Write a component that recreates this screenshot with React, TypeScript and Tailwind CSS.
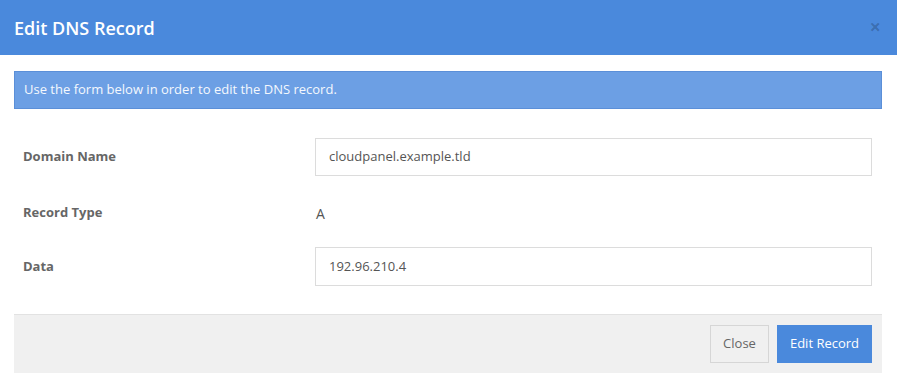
import React from "react";

export default function App() {
  return (
    <div className="w-[897px] h-[388px] bg-white font-['Open_Sans',sans-serif] overflow-hidden">
      <div className="h-[55px] bg-[#4a89dc] flex items-center justify-between pl-[14px] pr-[16px]">
        <h4 className="text-[18px] text-white font-semibold leading-none">Edit DNS Record</h4>
        <span className="text-[20px] font-bold leading-none text-black/20 -mt-[1px]">×</span>
      </div>
      <div className="px-[14px] pr-[15px]">
        <div className="mt-[16px] h-[38px] bg-[#6c9fe4] border border-[#5b8fd8] flex items-center px-[9px] text-[13px] text-[#f4f8fd]">
          Use the form below in order to edit the DNS record.
        </div>
        <div className="mt-[29px] h-[38px] flex items-center pl-[9px] pr-[10px]">
          <div className="w-[292px] text-[13px] font-bold text-[#666]">Domain Name</div>
          <div className="flex-1 h-full border border-[#dcdcdc] flex items-center px-[13px] text-[13px] text-[#555]">
            cloudpanel.example.tld
          </div>
        </div>
        <div className="mt-[18px] h-[38px] flex items-center pl-[9px] pr-[10px]">
          <div className="w-[292px] text-[13px] font-bold text-[#666]">Record Type</div>
          <div className="flex-1 text-[14px] text-[#555] pl-[1px]">A</div>
        </div>
        <div className="mt-[15px] h-[39px] flex items-center pl-[9px] pr-[10px]">
          <div className="w-[292px] text-[13px] font-bold text-[#666]">Data</div>
          <div className="flex-1 h-full border border-[#dcdcdc] flex items-center px-[13px] text-[13px] text-[#555]">
            192.96.210.4
          </div>
        </div>
        <div className="mt-[28px] h-[59px] bg-[#f0f0f0] border-t border-[#e2e2e2] flex items-center justify-end gap-[8px] pr-[10px]">
          <button className="h-[38px] w-[59px] border border-[#d6d6d6] bg-[#f0f0f0] text-[13px] text-[#666]">
            Close
          </button>
          <button className="h-[38px] w-[95px] bg-[#4a89dc] text-[13px] text-white">
            Edit Record
          </button>
        </div>
      </div>
    </div>
  );
}
